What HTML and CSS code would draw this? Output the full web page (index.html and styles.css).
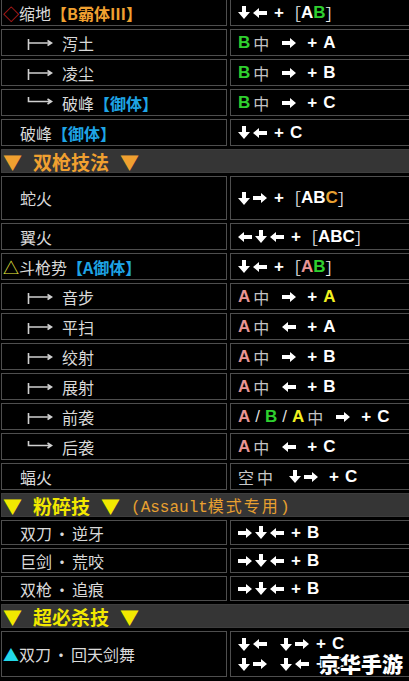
FILE: index.html
```html
<!doctype html>
<html>
	<head>
	    <meta charset="utf-8"/>
	    <title>出招表</title>
		<link rel="stylesheet" href="styles.css">
	</head>
	<body>

	<svg class="defs" aria-hidden="true">
	    <symbol id="r" viewBox="0 0 14 10"><path d="M0 3H8V0L14 5L8 10V7H0Z"/></symbol>
	    <symbol id="l" viewBox="0 0 14 10"><path d="M14 3H6V0L0 5L6 10V7H14Z"/></symbol>
	    <symbol id="d" viewBox="0 0 12 13"><path d="M4 0H8V6H12L6 13L0 6H4Z"/></symbol>
	    <symbol id="tee" viewBox="0 0 26 14"><path d="M1.5 3V14M1.5 7H24M20.5 4.5L24.5 7L20.5 9.5" fill="none" stroke="#d0d0d0" stroke-width="1.6"/></symbol>
	    <symbol id="elb" viewBox="0 0 26 14"><path d="M1.5 1V5.5H24M20.5 3L24.5 5.5L20.5 8" fill="none" stroke="#d0d0d0" stroke-width="1.6"/></symbol>
	</svg>

	<div class="sheet">

	    <div class="row">
	        <div class="name mark"><span class="pre red">◇</span>缩地<span class="tag or">【B霸体Ⅲ】</span></div>
	        <div class="cmd"><span class="keys"><svg class="v"><use href="#d"/></svg><svg class="h"><use href="#l"/></svg></span><span class="plus">+</span><span class="br">［</span>A<span class="g">B</span><span class="br">］</span></div>
	    </div>
	    <div class="row">
	        <div class="name sub"><svg class="tree"><use href="#tee"/></svg>泻土</div>
	        <div class="cmd"><span class="cond"><span class="g">B</span><span class="zh">中</span></span><span class="keys wide"><svg class="h"><use href="#r"/></svg></span><span class="plus">+</span>A</div>
	    </div>
	    <div class="row">
	        <div class="name sub"><svg class="tree"><use href="#tee"/></svg>凌尘</div>
	        <div class="cmd"><span class="cond"><span class="g">B</span><span class="zh">中</span></span><span class="keys wide"><svg class="h"><use href="#r"/></svg></span><span class="plus">+</span>B</div>
	    </div>
	    <div class="row">
	        <div class="name sub"><svg class="tree"><use href="#elb"/></svg>破峰<span class="tag bl">【御体】</span></div>
	        <div class="cmd"><span class="cond"><span class="g">B</span><span class="zh">中</span></span><span class="keys wide"><svg class="h"><use href="#r"/></svg></span><span class="plus">+</span>C</div>
	    </div>
	    <div class="row">
	        <div class="name">破峰<span class="tag bl">【御体】</span></div>
	        <div class="cmd"><span class="keys"><svg class="v"><use href="#d"/></svg><svg class="h"><use href="#l"/></svg></span><span class="plus">+</span>C</div>
	    </div>

	    <div class="sec or"><span class="tri">▼</span>双枪技法<span class="tri">▼</span></div>

	    <div class="row tall">
	        <div class="name">蛇火</div>
	        <div class="cmd"><span class="keys"><svg class="v"><use href="#d"/></svg><svg class="h"><use href="#r"/></svg></span><span class="plus">+</span><span class="br">［</span>AB<span class="o">C</span><span class="br">］</span></div>
	    </div>
	    <div class="row">
	        <div class="name">翼火</div>
	        <div class="cmd"><span class="keys"><svg class="h"><use href="#l"/></svg><svg class="v"><use href="#d"/></svg><svg class="h"><use href="#l"/></svg></span><span class="plus">+</span><span class="br">［</span>ABC<span class="br">］</span></div>
	    </div>
	    <div class="row">
	        <div class="name mark"><span class="pre yl">△</span>斗枪势<span class="tag bl">【A御体】</span></div>
	        <div class="cmd"><span class="keys"><svg class="v"><use href="#d"/></svg><svg class="h"><use href="#l"/></svg></span><span class="plus">+</span><span class="br">［</span><span class="p">A</span><span class="g">B</span><span class="br">］</span></div>
	    </div>
	    <div class="row">
	        <div class="name sub"><svg class="tree"><use href="#tee"/></svg>音步</div>
	        <div class="cmd"><span class="cond"><span class="p">A</span><span class="zh">中</span></span><span class="keys wide"><svg class="h"><use href="#r"/></svg></span><span class="plus">+</span><span class="y">A</span></div>
	    </div>
	    <div class="row">
	        <div class="name sub"><svg class="tree"><use href="#tee"/></svg>平扫</div>
	        <div class="cmd"><span class="cond"><span class="p">A</span><span class="zh">中</span></span><span class="keys wide"><svg class="h"><use href="#l"/></svg></span><span class="plus">+</span>A</div>
	    </div>
	    <div class="row">
	        <div class="name sub"><svg class="tree"><use href="#tee"/></svg>绞射</div>
	        <div class="cmd"><span class="cond"><span class="p">A</span><span class="zh">中</span></span><span class="keys wide"><svg class="h"><use href="#r"/></svg></span><span class="plus">+</span>B</div>
	    </div>
	    <div class="row">
	        <div class="name sub"><svg class="tree"><use href="#tee"/></svg>展射</div>
	        <div class="cmd"><span class="cond"><span class="p">A</span><span class="zh">中</span></span><span class="keys wide"><svg class="h"><use href="#l"/></svg></span><span class="plus">+</span>B</div>
	    </div>
	    <div class="row">
	        <div class="name sub"><svg class="tree"><use href="#tee"/></svg>前袭</div>
	        <div class="cmd"><span class="cond"><span class="p">A</span><span class="sl">/</span><span class="g">B</span><span class="sl">/</span><span class="y">A</span><span class="zh">中</span></span><span class="keys wide"><svg class="h"><use href="#r"/></svg></span><span class="plus">+</span>C</div>
	    </div>
	    <div class="row">
	        <div class="name sub"><svg class="tree"><use href="#elb"/></svg>后袭</div>
	        <div class="cmd"><span class="cond"><span class="p">A</span><span class="zh">中</span></span><span class="keys wide"><svg class="h"><use href="#l"/></svg></span><span class="plus">+</span>C</div>
	    </div>
	    <div class="row">
	        <div class="name">蝠火</div>
	        <div class="cmd"><span class="cond air">空中</span><span class="keys wide"><svg class="v"><use href="#d"/></svg><svg class="h"><use href="#r"/></svg></span><span class="plus">+</span>C</div>
	    </div>

	    <div class="sec ye"><span class="tri">▼</span>粉碎技<span class="tri">▼</span><span class="note">(Assault<span class="note-zh">模式专用</span>)</span></div>

	    <div class="row low">
	        <div class="name">双刀<span class="dot">·</span>逆牙</div>
	        <div class="cmd"><span class="keys"><svg class="h"><use href="#r"/></svg><svg class="v"><use href="#d"/></svg><svg class="h"><use href="#l"/></svg></span><span class="plus">+</span>B</div>
	    </div>
	    <div class="row low">
	        <div class="name">巨剑<span class="dot">·</span>荒咬</div>
	        <div class="cmd"><span class="keys"><svg class="h"><use href="#r"/></svg><svg class="v"><use href="#d"/></svg><svg class="h"><use href="#l"/></svg></span><span class="plus">+</span>B</div>
	    </div>
	    <div class="row low">
	        <div class="name">双枪<span class="dot">·</span>追痕</div>
	        <div class="cmd"><span class="keys"><svg class="h"><use href="#r"/></svg><svg class="v"><use href="#d"/></svg><svg class="h"><use href="#l"/></svg></span><span class="plus">+</span>B</div>
	    </div>

	    <div class="sec ye"><span class="tri">▼</span>超必杀技<span class="tri">▼</span></div>

	    <div class="row big">
	        <div class="name mark"><span class="pre cy">▲</span>双刀<span class="dot">·</span>回天剑舞</div>
	        <div class="cmd lines">
	            <div class="line"><span class="keys gap"><svg class="v"><use href="#d"/></svg><svg class="h"><use href="#l"/></svg></span><span class="keys"><svg class="v"><use href="#d"/></svg><svg class="h"><use href="#r"/></svg></span><span class="plus">+</span>C</div>
	            <div class="line"><span class="keys gap"><svg class="v"><use href="#d"/></svg><svg class="h"><use href="#r"/></svg></span><span class="keys"><svg class="v"><use href="#d"/></svg><svg class="h"><use href="#l"/></svg></span><span class="plus">+</span>C</div>
	        </div>
	    </div>

	</div>

	<div class="stamp">京华手游</div>

	</body>
</html>
```

FILE: styles.css
```css
html, body{
    margin: 0;
    background: #000;
    overflow: hidden;
}

.defs{
    position: absolute;
    width: 0;
    height: 0;
}

.sheet{
    display: flex;
    flex-direction: column;
    gap: 3px;
    width: 412px;
    margin: -1px 0 0 1px;
}

.row{
    display: flex;
    gap: 3px;
    height: 27px;
}
.row.tall{ height: 44px; }
.row.low{ height: 25px; }
.row.big{ height: 46px; }

.name, .cmd{
    box-sizing: border-box;
    border: 1px solid #4e4e4e;
    display: flex;
    align-items: center;
    white-space: nowrap;
}

.name{
    flex: none;
    width: 226px;
    padding-left: 18px;
    color: #dadada;
    font: 16px "Noto Sans CJK SC", sans-serif;
}
.name.mark{ padding-left: 1px; }
.name.sub{ padding-left: 25px; }

.tree{
    width: 26px;
    height: 14px;
    margin-right: 9px;
}

.tag{ font-weight: bold; }
.or{ color: #f0a030; }
.bl{ color: #1ea4e6; }
.red{ color: #e02828; }
.yl{ color: #f0f040; }
.cy{ color: #22d8e8; }

.dot{
    width: 20px;
    text-align: center;
}

.cmd{
    flex: 1;
    padding-left: 7px;
    color: #fff;
    font: bold 17px "Liberation Sans", Arial, sans-serif;
}

.keys{
    display: inline-flex;
    align-items: center;
    gap: 3px;
    margin-right: 7px;
}
.keys.wide{ margin: 0 11px 0 13px; }
.keys.gap{ margin-right: 13px; }
.keys svg{ fill: #fff; }
.keys .h{ width: 14px; height: 10px; }
.keys .v{ width: 12px; height: 13px; }

.plus{ margin-right: 6px; }
.plus + .br{ margin-left: -5px; }

.br{
    font: 16px "Noto Sans CJK SC", sans-serif;
    color: #eee;
}

.cond{ display: inline-flex; align-items: center; }
.zh{
    margin-left: 3px;
    font: 16px "Noto Sans CJK SC", sans-serif;
    color: #c4c4c4;
}
.sl{
    margin: 0 5px;
    font-weight: normal;
    color: #ddd;
}
.air{
    font: 16px "Noto Sans CJK SC", sans-serif;
    letter-spacing: 3px;
    color: #c8c8c8;
}

.g{ color: #2fd02f; }
.p{ color: #e89494; }
.y{ color: #f2f020; }
.o{ color: #e8a030; }

.cmd.lines{
    flex-direction: column;
    align-items: flex-start;
    justify-content: center;
}
.line{
    display: flex;
    align-items: center;
    height: 20px;
}

.sec{
    box-sizing: border-box;
    height: 24px;
    background: #353535;
    border: 1px solid #3e3e3e;
    display: flex;
    align-items: center;
    padding-left: 1px;
    font: bold 19px "Noto Sans CJK SC", sans-serif;
    white-space: nowrap;
}
.sec.ye{ color: #f2e800; }
.sec .tri:first-child{ margin-right: 11px; }
.sec .tri + *, .sec .tri:last-child{ margin-left: 11px; }
.note{
    margin-left: 13px;
    color: #e8a030;
    font: 16px "Liberation Mono", "Noto Sans CJK SC", monospace;
}
.note-zh{
    font-family: "Noto Sans CJK SC", sans-serif;
    letter-spacing: 2px;
}

.stamp{
    position: absolute;
    left: 319px;
    top: 648px;
    color: #fff;
    font: 900 21px "Noto Sans CJK SC", sans-serif;
    text-shadow: 0 0 2px #000, 1px 1px 1px #000, -1px -1px 1px #000;
}
```
